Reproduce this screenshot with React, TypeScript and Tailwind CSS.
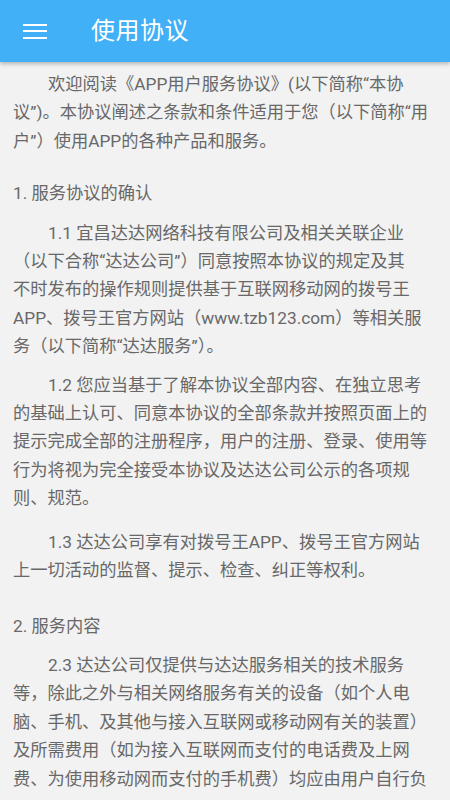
import React from "react";

const P = ({ children, indent = true, className = "" }: { children: React.ReactNode; indent?: boolean; className?: string }) => (
  <p className={`${indent ? "indent-[35px]" : ""} whitespace-nowrap ${className}`}>{children}</p>
);

export default function App() {
  return (
    <div
      className="w-[450px] h-[800px] overflow-hidden bg-[#f2f2f2] flex flex-col"
      style={{ fontFamily: 'Roboto, "Noto Sans CJK SC", sans-serif' }}
    >
      <header className="h-[62px] bg-[#41b0f6] flex items-center shrink-0 shadow-[0_2px_4px_rgba(0,0,0,0.25)] relative z-10">
        <div className="w-[91px] flex justify-start pl-[23px]">
          <div className="flex flex-col gap-[4.5px] w-[24px]">
            <span className="block h-[2px] bg-white" />
            <span className="block h-[2px] bg-white" />
            <span className="block h-[2px] bg-white" />
          </div>
        </div>
        <h1 className="text-white text-[24px] leading-none tracking-[0.5px]">使用协议</h1>
      </header>
      <main className="pl-[13px] pr-[10px] pt-[8px] text-[#686868] text-[17.25px] leading-[28.4px] flex flex-col">
        <P>
          欢迎阅读《APP用户服务协议》(以下简称“本协
          <br />
          议”)。本协议阐述之条款和条件适用于您（以下简称“用
          <br />
          户”）使用APP的各种产品和服务。
        </P>
        <P indent={false} className="mt-[24px]">1. 服务协议的确认</P>
        <P className="mt-[11px]">
          1.1 宜昌达达网络科技有限公司及相关关联企业
          <br />
          （以下合称“达达公司”）同意按照本协议的规定及其
          <br />
          不时发布的操作规则提供基于互联网移动网的拨号王
          <br />
          APP、拨号王官方网站（www.tzb123.com）等相关服
          <br />
          务（以下简称“达达服务”）。
        </P>
        <P className="mt-[10px]">
          1.2 您应当基于了解本协议全部内容、在独立思考
          <br />
          的基础上认可、同意本协议的全部条款并按照页面上的
          <br />
          提示完成全部的注册程序，用户的注册、登录、使用等
          <br />
          行为将视为完全接受本协议及达达公司公示的各项规
          <br />
          则、规范。
        </P>
        <P className="mt-[15px]">
          1.3 达达公司享有对拨号王APP、拨号王官方网站
          <br />
          上一切活动的监督、提示、检查、纠正等权利。
        </P>
        <P indent={false} className="mt-[27px]">2. 服务内容</P>
        <P className="mt-[11px]">
          2.3 达达公司仅提供与达达服务相关的技术服务
          <br />
          等，除此之外与相关网络服务有关的设备（如个人电
          <br />
          脑、手机、及其他与接入互联网或移动网有关的装置）
          <br />
          及所需费用（如为接入互联网而支付的电话费及上网
          <br />
          费、为使用移动网而支付的手机费）均应由用户自行负
        </P>
      </main>
    </div>
  );
}
